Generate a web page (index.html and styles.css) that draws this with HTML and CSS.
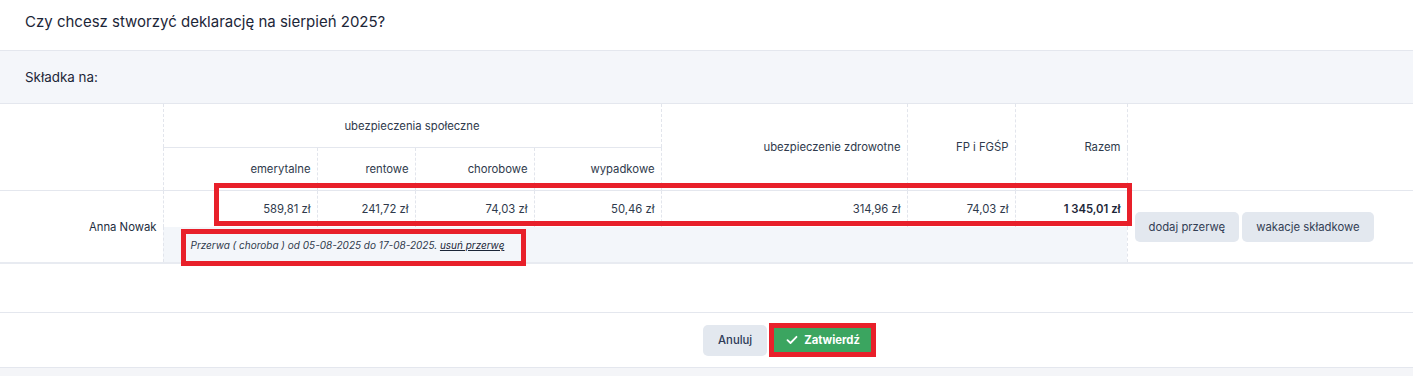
FILE: index.html
```html
<!DOCTYPE html>
<html lang="pl">
<head>
  <meta charset="UTF-8">
  <meta name="viewport" content="width=device-width, initial-scale=1.0">
  <title>Deklaracja</title>
  <link rel="stylesheet" href="styles.css">
</head>
<body>

<div class="modal">
  <h2 class="modal-title">Czy chcesz stworzyć deklarację na sierpień 2025?</h2>

  <div class="section-band">Składka na:</div>

  <div class="modal-body">
    <table class="contrib">
      <colgroup>
        <col class="c-name">
        <col class="c-emer">
        <col class="c-rent">
        <col class="c-chor">
        <col class="c-wyp">
        <col class="c-zdr">
        <col class="c-fp">
        <col class="c-sum">
        <col class="c-act">
      </colgroup>
      <thead>
        <tr class="head-top">
          <th rowspan="2"></th>
          <th colspan="4" class="group">ubezpieczenia społeczne</th>
          <th rowspan="2">ubezpieczenie zdrowotne</th>
          <th rowspan="2">FP i FGŚP</th>
          <th rowspan="2">Razem</th>
          <th rowspan="2"></th>
        </tr>
        <tr class="head-sub">
          <th>emerytalne</th>
          <th>rentowe</th>
          <th>chorobowe</th>
          <th>wypadkowe</th>
        </tr>
      </thead>
      <tbody>
        <tr class="amounts">
          <td rowspan="2" class="person">Anna Nowak</td>
          <td>589,81 zł</td>
          <td>241,72 zł</td>
          <td>74,03 zł</td>
          <td>50,46 zł</td>
          <td>314,96 zł</td>
          <td>74,03 zł</td>
          <td class="total">1 345,01 zł</td>
          <td rowspan="2" class="actions">
            <div class="actions-inner">
              <button class="btn btn-light">dodaj przerwę</button>
              <button class="btn btn-light">wakacje składkowe</button>
            </div>
          </td>
        </tr>
        <tr class="break-row">
          <td colspan="7" class="break-info">
            Przerwa ( choroba ) od 05-08-2025 do 17-08-2025. <a href="#">usuń przerwę</a>
          </td>
        </tr>
      </tbody>
    </table>
  </div>

  <div class="modal-footer">
    <button class="btn btn-cancel">Anuluj</button>
    <button class="btn btn-confirm">
      <svg width="12" height="10" viewBox="0 0 12 10"><polyline points="1.5,5.2 4.5,8 10.5,1.8" fill="none" stroke="#fff" stroke-width="1.8" stroke-linecap="round" stroke-linejoin="round"/></svg>
      Zatwierdź
    </button>
  </div>

  <!-- annotation boxes -->
  <div class="highlight hl-amounts"></div>
  <div class="highlight hl-break"></div>
  <div class="highlight hl-confirm"></div>
</div>

</body>
</html>
```

FILE: styles.css
```css
/* General */
body {
  margin: 0;
  font-family: Inter, "Noto Sans", sans-serif;
  background: #f4f5f8;
  color: #1c2638;
  overflow: hidden;
}

.modal {
  position: relative;
  width: 1578px;
  background: #fff;
  border-bottom: 1px solid #e4e7ee;
}

.modal-title {
  margin: 0;
  height: 51px;
  box-sizing: border-box;
  padding: 13px 25px 0;
  font-size: 15px;
  font-weight: 400;
  line-height: 18px;
  border-bottom: 1px solid #e4e7ee;
}

.section-band {
  height: 53px;
  box-sizing: border-box;
  display: flex;
  align-items: center;
  padding: 0 25px;
  font-size: 13.4px;
  background: #f4f6fa;
  border-bottom: 1px solid #e4e7ee;
}

.modal-body {
  padding-bottom: 48px;
  border-bottom: 1px solid #e4e7ee;
}

/* Table */
.contrib {
  width: 100%;
  border-collapse: collapse;
  table-layout: fixed;
}

.c-name { width: 163px; }
.c-emer { width: 154px; }
.c-rent { width: 98px; }
.c-chor { width: 119px; }
.c-wyp { width: 127px; }
.c-zdr { width: 246px; }
.c-fp { width: 108px; }
.c-sum { width: 112px; }

.contrib th,
.contrib td {
  padding: 0 6px;
  text-align: right;
  font-size: 11.3px;
  font-weight: 400;
  color: #2f3a4c;
  border-left: 1px dashed #e2e5ec;
  border-right: 1px dashed #e2e5ec;
}

.contrib th:first-child,
.contrib tr.amounts td:first-child {
  border-left: none;
}

.head-top th {
  height: 43px;
}

.head-top th.group {
  text-align: center;
  border-bottom: 1px solid #e4e7ee;
}

.head-sub th {
  height: 42px;
}

thead tr:last-child th,
.head-top th[rowspan] {
  border-bottom: 1px solid #e4e7ee;
}

.amounts td {
  height: 36px;
}

.contrib td.person {
  color: #232d40;
  border-bottom: 2px solid #e8ebf1;
}

.contrib td.total {
  font-weight: 600;
  color: #1c2638;
}

.contrib td.actions {
  text-align: left;
  padding: 0 7px;
  border-right: none;
  border-bottom: 2px solid #e8ebf1;
}

.actions-inner {
  display: flex;
  gap: 3px;
}

.break-row td {
  height: 35px;
}

.contrib td.break-info {
  text-align: left;
  padding-left: 27px;
  font-size: 10px;
  font-style: italic;
  color: #2f3a4c;
  background: #f3f6fa;
  border-bottom: 2px solid #e8ebf1;
}

.break-info a {
  color: #1c2638;
  text-decoration: underline;
}

/* Buttons */
.btn {
  font-family: inherit;
  font-size: 11.3px;
  border: none;
  border-radius: 5px;
  cursor: pointer;
}

.btn-light {
  height: 30px;
  padding: 0 14px;
  color: #334055;
  background: #e3e8ef;
}

.modal-footer {
  height: 54px;
  display: flex;
  justify-content: center;
  align-items: center;
  gap: 4px;
}

.btn-cancel {
  height: 31px;
  padding: 0 15px;
  color: #2e3b58;
  font-weight: 500;
  background: #e3e8ef;
}

.btn-confirm {
  height: 31px;
  padding: 0 15px;
  display: flex;
  align-items: center;
  gap: 6px;
  color: #fff;
  font-weight: 700;
  background: #3ba560;
  border-radius: 0;
}

/* Annotation boxes */
.highlight {
  position: absolute;
  box-sizing: border-box;
  border: 5px solid #e8202a;
  pointer-events: none;
}

.hl-amounts {
  left: 214px;
  top: 183px;
  width: 918px;
  height: 43px;
}

.hl-break {
  left: 181px;
  top: 229px;
  width: 345px;
  height: 37px;
}

.hl-confirm {
  left: 769px;
  top: 323px;
  width: 107px;
  height: 34px;
}
```
